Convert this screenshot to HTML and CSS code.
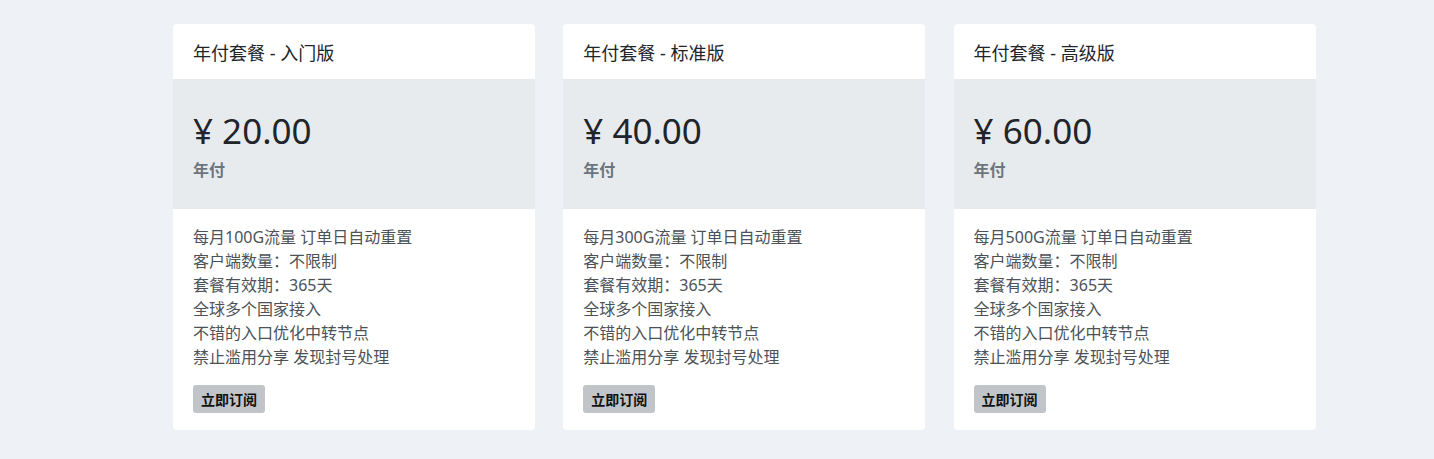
FILE: index.html
```html
<!DOCTYPE html>
<html lang="zh-CN">
<head>
<meta charset="utf-8">
<title>套餐</title>
<link rel="stylesheet" href="styles.css">
</head>
<body>
<div class="plans">
  <div class="card">
    <div class="card-head">年付套餐 - 入门版</div>
    <div class="price-box">
      <div class="price">¥ 20.00</div>
      <div class="period">年付</div>
    </div>
    <div class="card-body">
      <ul class="features">
        <li>每月100G流量 订单日自动重置</li>
        <li>客户端数量：不限制</li>
        <li>套餐有效期：365天</li>
        <li>全球多个国家接入</li>
        <li>不错的入口优化中转节点</li>
        <li>禁止滥用分享 发现封号处理</li>
      </ul>
      <button class="btn">立即订阅</button>
    </div>
  </div>
  <div class="card">
    <div class="card-head">年付套餐 - 标准版</div>
    <div class="price-box">
      <div class="price">¥ 40.00</div>
      <div class="period">年付</div>
    </div>
    <div class="card-body">
      <ul class="features">
        <li>每月300G流量 订单日自动重置</li>
        <li>客户端数量：不限制</li>
        <li>套餐有效期：365天</li>
        <li>全球多个国家接入</li>
        <li>不错的入口优化中转节点</li>
        <li>禁止滥用分享 发现封号处理</li>
      </ul>
      <button class="btn">立即订阅</button>
    </div>
  </div>
  <div class="card">
    <div class="card-head">年付套餐 - 高级版</div>
    <div class="price-box">
      <div class="price">¥ 60.00</div>
      <div class="period">年付</div>
    </div>
    <div class="card-body">
      <ul class="features">
        <li>每月500G流量 订单日自动重置</li>
        <li>客户端数量：不限制</li>
        <li>套餐有效期：365天</li>
        <li>全球多个国家接入</li>
        <li>不错的入口优化中转节点</li>
        <li>禁止滥用分享 发现封号处理</li>
      </ul>
      <button class="btn">立即订阅</button>
    </div>
  </div>
</div>
</body>
</html>
```
FILE: styles.css
```css
html, body {
  margin: 0;
  padding: 0;
  background: #eef1f6;
  font-family: "Noto Sans", "Noto Sans CJK SC", sans-serif;
  color: #212529;
}
.plans {
  display: grid;
  grid-template-columns: 362px 362px 362px;
  column-gap: 28.3px;
  padding: 24px 0 0 173px;
}
.card {
  background: #fff;
  border-radius: 4px;
  overflow: hidden;
  display: flex;
  flex-direction: column;
  height: 406px;
}
.card-head {
  height: 55px;
  box-sizing: border-box;
  padding: 0 20px;
  display: flex;
  align-items: center;
  font-size: 18px;
  color: #212529;
}
.price-box {
  background: #e8ebee;
  height: 130px;
  box-sizing: border-box;
  padding: 29px 20px 0;
}
.price {
  font-size: 35px;
  line-height: 46px;
  color: #212529;
}
.period {
  margin-top: 4px;
  font-size: 16px;
  font-weight: 700;
  color: #6c757d;
  line-height: 24px;
}
.card-body {
  padding: 16px 20px 0;
}
.features {
  list-style: none;
  margin: 0;
  padding: 0;
  font-size: 16px;
  line-height: 24px;
  color: #4c5258;
}
.btn {
  margin-top: 16px;
  border: none;
  background: #c1c5ca;
  border-radius: 3px;
  width: 72px;
  height: 28px;
  padding: 0;
  font-family: "Noto Sans CJK SC", sans-serif;
  font-size: 14px;
  font-weight: 700;
  color: #111;
}
```
